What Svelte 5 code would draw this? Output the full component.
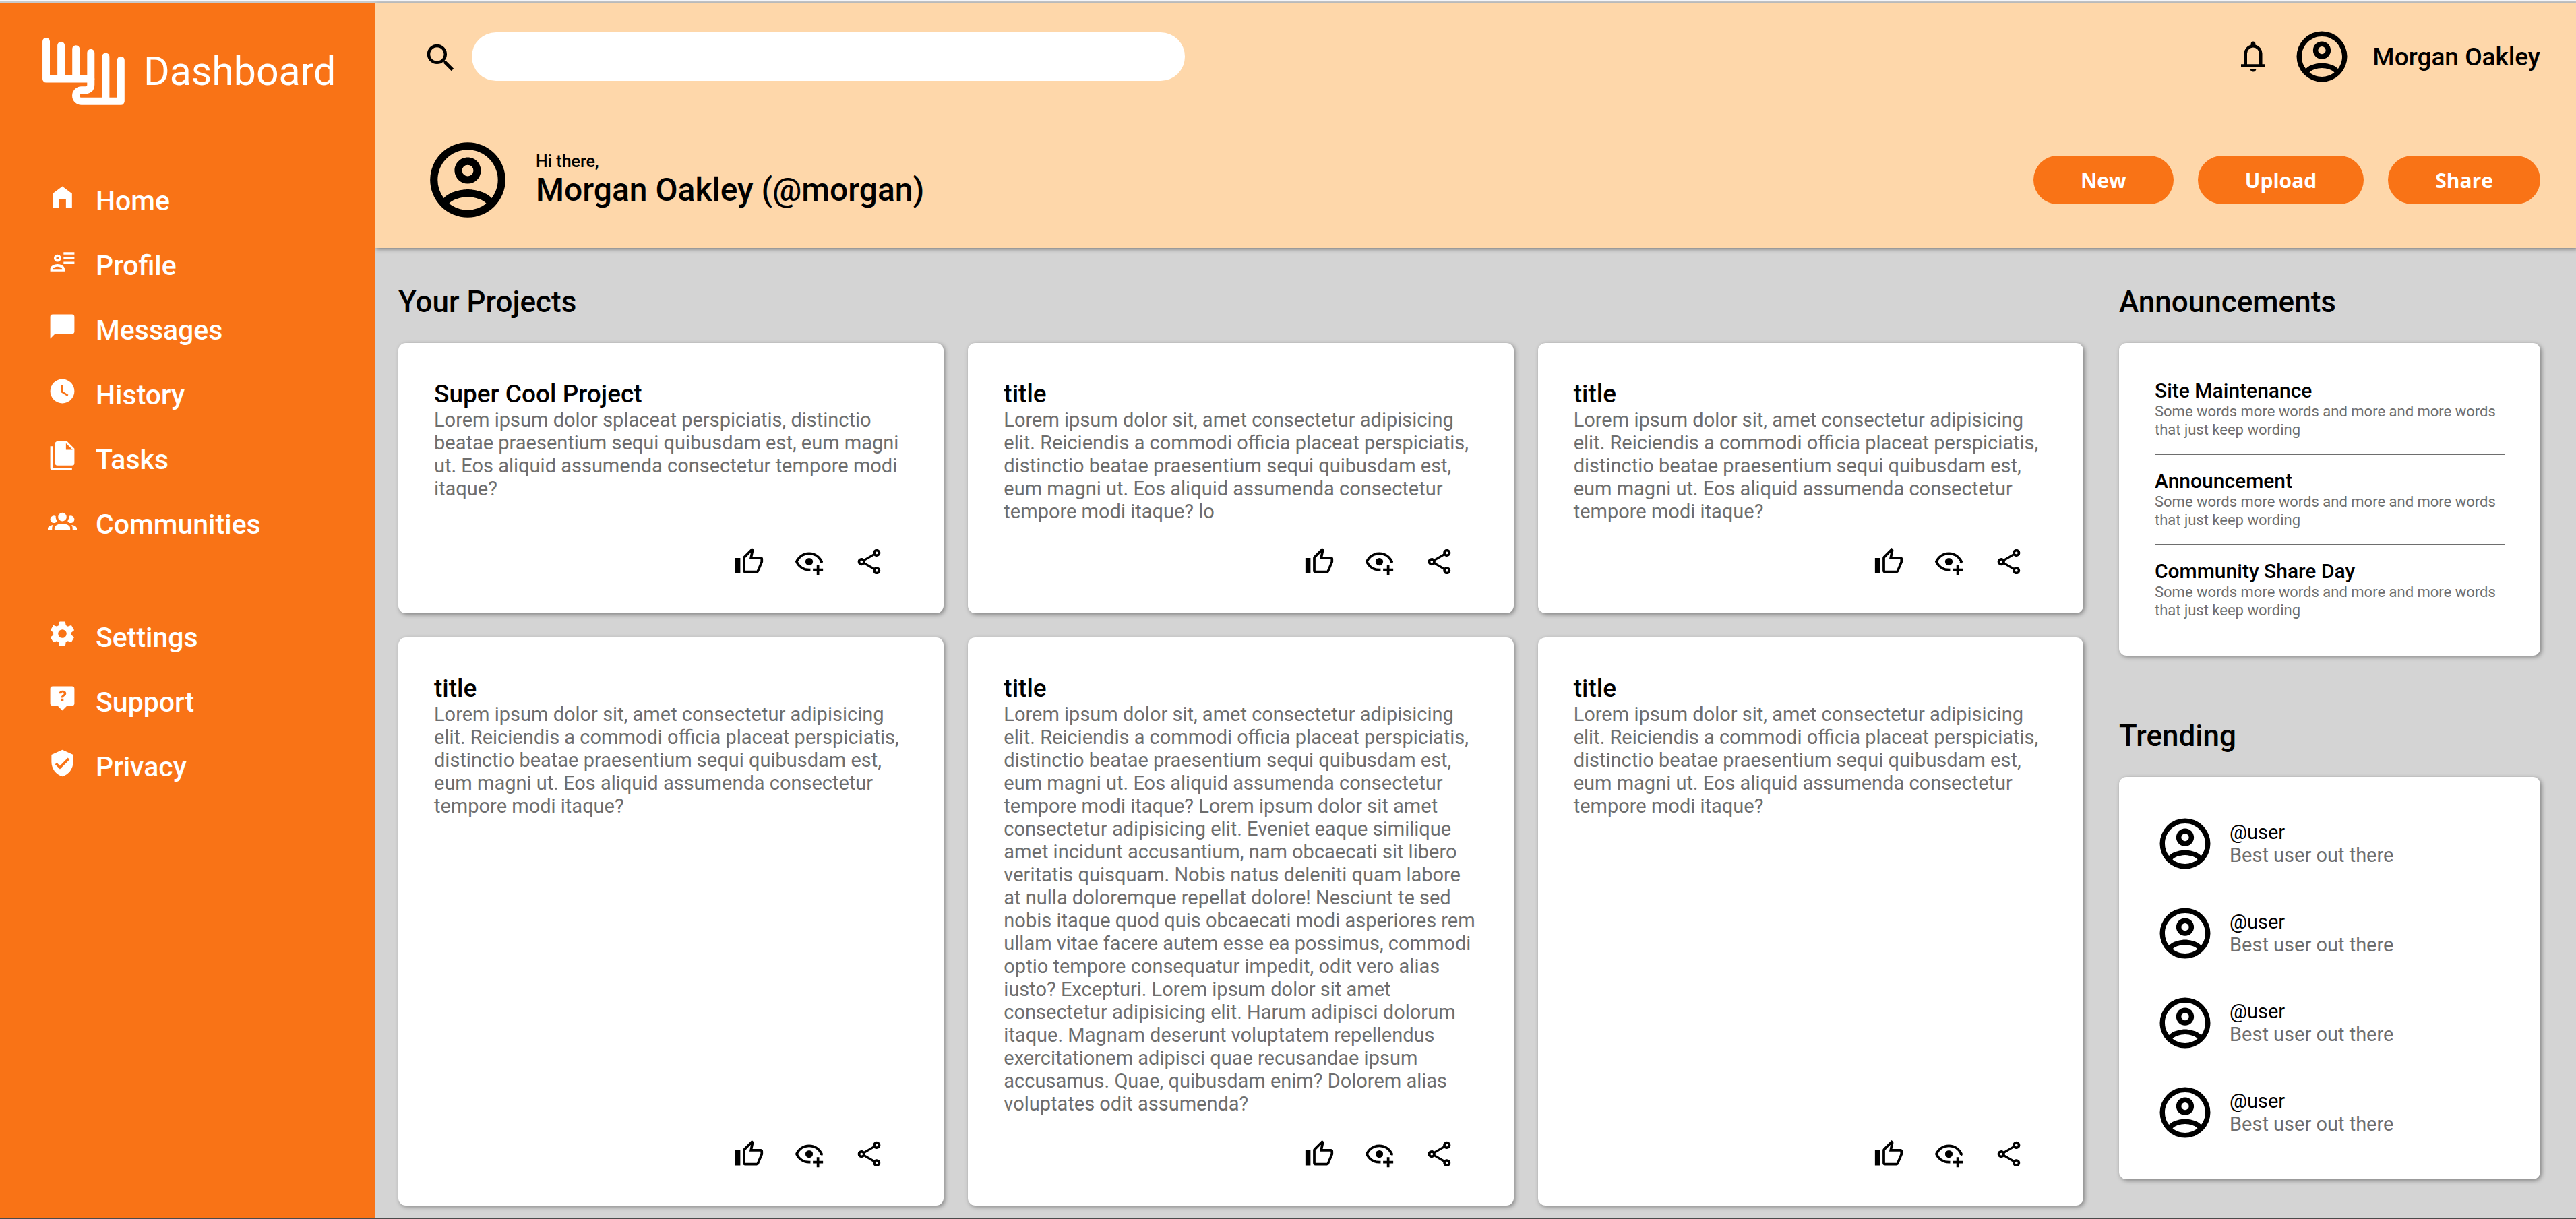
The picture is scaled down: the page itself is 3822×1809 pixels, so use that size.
<script>
  const icons = {
    home: 'M12 3l8 6v12h-5v-7H9v7H4V9z',
    profile:
      'M13 4h9v2h-9zM13 8h9v2h-9zM13 12h9v2h-9zM8 6a3 3 0 1 1 0 6a3 3 0 0 1 0-6M8 7.9a1.1 1.1 0 1 0 0 2.2a1.1 1.1 0 0 0 0-2.2M2 20v-2C2 15.6 5.2 14 8 14s6 1.6 6 4v2zM4 18h8c-.5-1.2-2.3-2-4-2s-3.5.8-4 2z',
    message: 'M20 2H4a2 2 0 0 0-2 2v18l4-4h14a2 2 0 0 0 2-2V4a2 2 0 0 0-2-2z',
    clock:
      'M12 2A10 10 0 0 0 2 12a10 10 0 0 0 10 10a10 10 0 0 0 10-10A10 10 0 0 0 12 2m4.2 14.2L11 13V7h1.5v5.2l4.5 2.7z',
    files:
      'M15 7h5.5L15 1.5V7M8 0h8l6 6v12a2 2 0 0 1-2 2H8a2 2 0 0 1-2-2V2a2 2 0 0 1 2-2M4 4v18h16v2H4a2 2 0 0 1-2-2V4h2z',
    group:
      'M12 5.5A3.5 3.5 0 0 1 15.5 9a3.5 3.5 0 0 1-3.5 3.5A3.5 3.5 0 0 1 8.5 9A3.5 3.5 0 0 1 12 5.5M5 8c.56 0 1.08.15 1.53.42c-.15 1.43.27 2.85 1.13 3.96C7.16 13.34 6.16 14 5 14a3 3 0 0 1-3-3a3 3 0 0 1 3-3m14 0a3 3 0 0 1 3 3a3 3 0 0 1-3 3c-1.16 0-2.16-.66-2.66-1.62a5.536 5.536 0 0 0 1.13-3.96c.45-.27.97-.42 1.53-.42M5.5 18.25c0-2.07 2.91-3.75 6.5-3.75s6.5 1.68 6.5 3.75V20h-13v-1.75M0 20v-1.5c0-1.39 1.89-2.56 4.45-2.9c-.59.68-.95 1.62-.95 2.65V20H0m24 0h-3.5v-1.75c0-1.03-.36-1.97-.95-2.65c2.56.34 4.45 1.51 4.45 2.9V20z',
    cog: 'M12 15.5A3.5 3.5 0 0 1 8.5 12A3.5 3.5 0 0 1 12 8.5a3.5 3.5 0 0 1 3.5 3.5a3.5 3.5 0 0 1-3.5 3.5m7.43-2.53c.04-.32.07-.64.07-.97c0-.33-.03-.66-.07-1l2.11-1.63c.19-.15.24-.42.12-.64l-2-3.46c-.12-.22-.39-.31-.61-.22l-2.49 1c-.52-.39-1.06-.73-1.69-.98l-.37-2.65A.506.506 0 0 0 14 2h-4c-.25 0-.46.18-.5.42l-.37 2.65c-.63.25-1.17.59-1.69.98l-2.49-1c-.22-.09-.49 0-.61.22l-2 3.46c-.13.22-.07.49.12.64L4.57 11c-.04.34-.07.67-.07 1c0 .33.03.65.07.97l-2.11 1.66c-.19.15-.25.42-.12.64l2 3.46c.12.22.39.3.61.22l2.49-1.01c.52.4 1.06.74 1.69.99l.37 2.65c.04.24.25.42.5.42h4c.25 0 .46-.18.5-.42l.37-2.65c.63-.26 1.17-.59 1.69-.99l2.49 1.01c.22.08.49 0 .61-.22l2-3.46c.12-.22.07-.49-.12-.64z',
    help: 'M4 2h16a2 2 0 0 1 2 2v12a2 2 0 0 1-2 2h-4l-4 4l-4-4H4a2 2 0 0 1-2-2V4a2 2 0 0 1 2-2M11 12.2v1.9h2v-1.9zM9.3 7.9h2c0-.6.4-.9.9-.9c.6 0 1 .3 1 .9c0 .5-.3.8-.8 1.2c-.9.6-1.4 1.1-1.4 2.3h1.9c0-.7.3-1 .9-1.4c.8-.6 1.4-1.1 1.4-2.1c0-1.5-1.3-2.4-3-2.4s-2.9.8-2.9 2.4z',
    shield:
      'M10 17l-4-4l1.41-1.41L10 14.17l6.59-6.59L18 9m-6-8L3 5v6c0 5.55 3.84 10.74 9 12c5.16-1.26 9-6.45 9-12V5z',
    search:
      'M9.5 3A6.5 6.5 0 0 1 16 9.5c0 1.61-.59 3.09-1.56 4.23l.27.27h.79l5 5l-1.5 1.5l-5-5v-.79l-.27-.27A6.516 6.516 0 0 1 9.5 16A6.5 6.5 0 0 1 3 9.5A6.5 6.5 0 0 1 9.5 3m0 2C7 5 5 7 5 9.5S7 14 9.5 14S14 12 14 9.5S12 5 9.5 5z',
    bell: 'M4 19v-2h2v-7q0-2.075 1.25-3.687T10.5 4.2v-.7q0-.625.438-1.062T12 2t1.063.438T13.5 3.5v.7q2 .5 3.25 2.113T18 10v7h2v2zm8 3q-.825 0-1.412-.587T10 20h4q0 .825-.587 1.413T12 22m-4-5h8v-7q0-1.65-1.175-2.825T12 6T9.175 7.175T8 10z',
    account:
      'M12 2A10 10 0 0 0 2 12a10 10 0 0 0 10 10a10 10 0 0 0 10-10A10 10 0 0 0 12 2M7.07 18.28c.43-.9 3.05-1.78 4.93-1.78s4.5.88 4.93 1.78A7.893 7.893 0 0 1 12 20c-1.86 0-3.57-.64-4.93-1.72m11.29-1.45c-1.43-1.74-4.9-2.33-6.36-2.33s-4.93.59-6.36 2.33A7.928 7.928 0 0 1 4 12c0-4.41 3.59-8 8-8s8 3.59 8 8c0 1.82-.62 3.5-1.64 4.83M12 6c-1.94 0-3.5 1.56-3.5 3.5S10.06 13 12 13s3.5-1.56 3.5-3.5S13.94 6 12 6m0 5a1.5 1.5 0 0 1-1.5-1.5A1.5 1.5 0 0 1 12 8a1.5 1.5 0 0 1 1.5 1.5A1.5 1.5 0 0 1 12 11z',
    like: 'M5 9v12H1V9h4m4 12a2 2 0 0 1-2-2V9c0-.55.22-1.05.59-1.41L14.17 1l1.06 1.06c.27.27.44.64.44 1.05l-.03.32L14.69 8H21a2 2 0 0 1 2 2v2c0 .26-.05.5-.14.73l-3.02 7.05C19.54 20.5 18.83 21 18 21H9m0-2h9.03L21 12v-2h-8.79l1.13-5.32L9 9.03V19z',
    watch:
      'M12 4.5c5 0 9.27 3.11 11 7.5c-.18.5-.41 1-.67 1.45c-.6-.4-1.07-.6-1.77-.8c.1-.2.2-.43.26-.65A9.82 9.82 0 0 0 12 6.5A9.82 9.82 0 0 0 3.18 12A9.82 9.82 0 0 0 12 17.5c.4 0 .8-.02 1.1-.07c-.06.35-.1.7-.1 1.07c0 .33.03.64.08.95c-.36.04-.7.05-1.08.05c-5 0-9.27-3.11-11-7.5C2.73 7.61 7 4.5 12 4.5M12 9a3 3 0 0 1 0 6a3 3 0 0 1 0-6M18 14.5h2v3h3v2h-3v3h-2v-3h-3v-2h3z',
    share:
      'M18 16.08c-.76 0-1.44.3-1.96.77L8.91 12.7c.05-.23.09-.46.09-.7c0-.24-.04-.47-.09-.7l7.05-4.11c.54.5 1.25.81 2.04.81a3 3 0 0 0 3-3a3 3 0 0 0-3-3a3 3 0 0 0-3 3c0 .24.04.47.09.7L8.04 9.81C7.5 9.31 6.79 9 6 9a3 3 0 0 0-3 3a3 3 0 0 0 3 3c.79 0 1.5-.31 2.04-.81l7.12 4.15c-.05.21-.08.43-.08.66c0 1.61 1.31 2.91 2.92 2.91c1.61 0 2.92-1.3 2.92-2.91A2.92 2.92 0 0 0 18 16.08M18 4a1 1 0 0 1 0 2a1 1 0 0 1 0-2M6 13a1 1 0 0 1 0-2a1 1 0 0 1 0 2m12 7.02a1 1 0 0 1 0-2a1 1 0 0 1 0 2z'
  };

  const navGroups = [
    [
      ['home', 'Home'],
      ['profile', 'Profile'],
      ['message', 'Messages'],
      ['clock', 'History'],
      ['files', 'Tasks'],
      ['group', 'Communities']
    ],
    [
      ['cog', 'Settings'],
      ['help', 'Support'],
      ['shield', 'Privacy']
    ]
  ];

  const lorem =
    'Lorem ipsum dolor sit, amet consectetur adipisicing elit. Reiciendis a commodi officia placeat perspiciatis, distinctio beatae praesentium sequi quibusdam est, eum magni ut. Eos aliquid assumenda consectetur tempore modi itaque?';

  const projects = [
    {
      title: 'Super Cool Project',
      text: 'Lorem ipsum dolor splaceat perspiciatis, distinctio beatae praesentium sequi quibusdam est, eum magni ut. Eos aliquid assumenda consectetur tempore modi itaque?'
    },
    { title: 'title', text: lorem + ' lo' },
    { title: 'title', text: lorem },
    { title: 'title', text: lorem },
    {
      title: 'title',
      text:
        lorem +
        ' Lorem ipsum dolor sit amet consectetur adipisicing elit. Eveniet eaque similique amet incidunt accusantium, nam obcaecati sit libero veritatis quisquam. Nobis natus deleniti quam labore at nulla doloremque repellat dolore! Nesciunt te sed nobis itaque quod quis obcaecati modi asperiores rem ullam vitae facere autem esse ea possimus, commodi optio tempore consequatur impedit, odit vero alias iusto? Excepturi. Lorem ipsum dolor sit amet consectetur adipisicing elit. Harum adipisci dolorum itaque. Magnam deserunt voluptatem repellendus exercitationem adipisci quae recusandae ipsum accusamus. Quae, quibusdam enim? Dolorem alias voluptates odit assumenda?'
    },
    { title: 'title', text: lorem }
  ];

  const actions = [
    ['like', 'Like'],
    ['watch', 'Watch'],
    ['share', 'Share']
  ];

  const announcements = ['Site Maintenance', 'Announcement', 'Community Share Day'];
  const users = [1, 2, 3, 4];
</script>

{#snippet icon(name)}
  <svg class="icon" viewBox="0 0 24 24" aria-hidden="true">
    <path fill-rule="evenodd" d={icons[name]} />
  </svg>
{/snippet}

<div class="page">
  <aside class="sidebar">
    <div class="brand">
      <svg class="logo" viewBox="0 0 367 301" aria-hidden="true">
        <path d="M16.5 16.5V184H216M83 34V184M149.5 50V184" />
        <path d="M216 67V209Q216 234 191 234H174A25 25 0 0 0 174 284H350V100M282.5 84V284" />
      </svg>
      <h1>Dashboard</h1>
    </div>
    <nav>
      {#each navGroups as group}
        <ul>
          {#each group as [name, label]}
            <li><a href="#{name}">{@render icon(name)}<span>{label}</span></a></li>
          {/each}
        </ul>
      {/each}
    </nav>
  </aside>

  <header class="top">
    <div class="bar">
      <label class="search">
        {@render icon('search')}
        <input type="search" aria-label="Search" />
      </label>
      <div class="account">
        <button class="bell" aria-label="Notifications">{@render icon('bell')}</button>
        <span class="avatar">{@render icon('account')}</span>
        <span class="name">Morgan Oakley</span>
      </div>
    </div>
    <div class="bar">
      <div class="greeting">
        <span class="avatar large">{@render icon('account')}</span>
        <div>
          <p class="hi">Hi there,</p>
          <p class="who">Morgan Oakley (@morgan)</p>
        </div>
      </div>
      <div class="buttons">
        <button>New</button>
        <button>Upload</button>
        <button>Share</button>
      </div>
    </div>
  </header>

  <main>
    <section>
      <h2>Your Projects</h2>
      <div class="projects">
        {#each projects as project}
          <article class="card project">
            <h3>{project.title}</h3>
            <p>{project.text}</p>
            <div class="actions">
              {#each actions as [name, label]}
                <button aria-label={label}>{@render icon(name)}</button>
              {/each}
            </div>
          </article>
        {/each}
      </div>
    </section>

    <div class="side">
      <section>
        <h2>Announcements</h2>
        <div class="card">
          {#each announcements as title}
            <article class="notice">
              <h4>{title}</h4>
              <p>Some words more words and more and more words that just keep wording</p>
            </article>
          {/each}
        </div>
      </section>
      <section>
        <h2>Trending</h2>
        <ul class="card trending">
          {#each users as _}
            <li>
              <span class="avatar">{@render icon('account')}</span>
              <div>
                <p class="handle">@user</p>
                <p>Best user out there</p>
              </div>
            </li>
          {/each}
        </ul>
      </section>
    </div>
  </main>
</div>

<style>
  :global(body) {
    margin: 0;
    background: #d4d4d4;
  }

  .page {
    --orange: #f97316;
    --tan: #fed7aa;
    --muted: #6e6e6e;
    display: grid;
    grid-template-columns: 556px minmax(0, 1fr);
    grid-template-rows: auto 1fr;
    box-sizing: border-box;
    min-height: calc(100vh - 2px);
    margin-top: 2px;
    border-top: 2px solid #c8cacc;
    border-bottom: 2px solid #4a4a4a;
    box-shadow: 0 -2px #f8f9fd;
    background: #d4d4d4;
    color: #000;
    font-family: Roboto, sans-serif;
    font-size: 29px;
    line-height: 34px;
  }

  h1, h2, h3, h4, p, ul {
    margin: 0;
    padding: 0;
    font-weight: 500;
  }

  p {
    font-weight: 400;
    color: var(--muted);
  }

  ul {
    list-style: none;
  }

  button {
    border: 0;
    padding: 0;
    background: none;
    color: inherit;
    cursor: pointer;
  }

  .icon {
    display: block;
    width: 100%;
    height: 100%;
    fill: currentColor;
  }

  .sidebar {
    grid-row: 1 / 3;
    z-index: 1;
    padding: 52px 27px 54px 63px;
    background: var(--orange);
    color: #fff;
  }

  .brand {
    display: flex;
    align-items: center;
    gap: 28px;
    height: 100px;
    margin-bottom: 115px;
  }

  .logo {
    width: 122px;
    height: 100px;
    fill: none;
    stroke: #fff;
    stroke-width: 33px;
    stroke-linecap: round;
    stroke-linejoin: round;
  }

  h1 {
    font-size: 59px;
    font-weight: 400;
    line-height: 70px;
  }

  nav {
    display: grid;
    gap: 114px;
    padding-left: 8px;
  }

  nav ul {
    display: grid;
    gap: 42px;
  }

  nav a {
    display: flex;
    align-items: flex-start;
    gap: 28px;
    color: inherit;
    font-size: 41px;
    font-weight: 500;
    line-height: 54px;
    text-decoration: none;
  }

  nav .icon {
    width: 43px;
    height: 43px;
  }

  .top {
    display: grid;
    gap: 71px;
    padding: 35px 53px 34px 71px;
    background: var(--tan);
    box-shadow: 2px 2px 6px gray;
  }

  .bar {
    display: flex;
    align-items: center;
    justify-content: space-between;
    gap: 36px;
  }

  .search {
    display: flex;
    align-items: center;
    gap: 19px;
    flex: 0 1 1131px;
  }

  .search .icon {
    flex: none;
    width: 54px;
    height: 54px;
    padding-top: 4px;
  }

  .search input {
    box-sizing: border-box;
    flex: 1;
    min-width: 0;
    height: 72px;
    padding: 0 36px;
    border: 0;
    border-radius: 36px;
    outline: 0;
    background: #fff;
    font: inherit;
  }

  .account {
    display: flex;
    align-items: center;
    gap: 30px;
  }

  .bell {
    width: 54px;
    height: 54px;
  }

  .avatar {
    flex: none;
    width: 90px;
    height: 90px;
  }

  .avatar.large {
    width: 134px;
    height: 134px;
  }

  .name {
    font-size: 37px;
    font-weight: 500;
    line-height: 43px;
  }

  .greeting {
    display: flex;
    align-items: center;
    gap: 34px;
  }

  .hi,
  .who {
    color: #000;
    font-weight: 500;
  }

  .hi {
    font-size: 25px;
    line-height: 29px;
  }

  .who {
    font-size: 48px;
    line-height: 56px;
  }

  .buttons {
    display: flex;
    gap: 36px;
  }

  .buttons button {
    height: 72px;
    padding: 0 70px;
    border-radius: 36px;
    background: var(--orange);
    color: #fff;
    font: 700 30px 'Open Sans', sans-serif;
  }

  main {
    display: grid;
    grid-template-columns: minmax(0, 1fr) 625px;
    align-items: start;
    gap: 53px;
    padding: 54px 53px 19px 35px;
  }

  h2 {
    margin-bottom: 35px;
    font-size: 44px;
    line-height: 52px;
  }

  .projects {
    display: grid;
    grid-template-columns: repeat(3, minmax(0, 1fr));
    gap: 36px;
  }

  .card {
    padding: 54px 53px;
    border-radius: 11px;
    background: #fff;
    box-shadow: 2px 2px 6px gray;
  }

  .project {
    display: flex;
    flex-direction: column;
  }

  h3 {
    font-size: 37px;
    line-height: 43px;
  }

  .actions {
    display: flex;
    justify-content: flex-end;
    gap: 44px;
    margin-top: auto;
    padding: 35px 35px 0 0;
  }

  .actions button {
    width: 45px;
    height: 45px;
  }

  .side {
    display: grid;
    gap: 93px;
  }

  .notice + .notice {
    margin-top: 22px;
    padding-top: 22px;
    border-top: 2px solid #6e6e6e;
  }

  h4 {
    font-size: 30px;
    line-height: 34px;
  }

  .notice p {
    font-size: 22px;
    line-height: 27px;
  }

  .trending {
    display: grid;
    gap: 43px;
  }

  .trending li {
    display: flex;
    align-items: center;
    gap: 21px;
  }

  .trending .handle {
    color: #000;
  }
</style>
